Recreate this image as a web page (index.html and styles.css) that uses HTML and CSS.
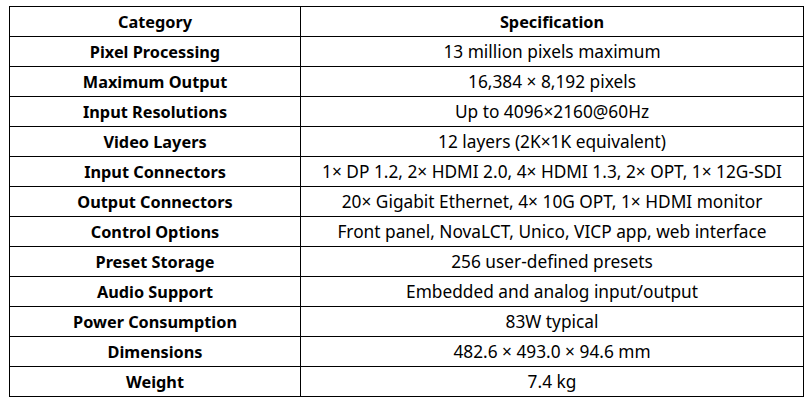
FILE: index.html
```html
<!DOCTYPE html>
<html>
<head>
<meta charset="utf-8">
<link rel="stylesheet" href="styles.css">
</head>
<body>
<table class="spec">
<colgroup><col class="c1"><col class="c2"></colgroup>
<thead>
<tr><th>Category</th><th>Specification</th></tr>
</thead>
<tbody>
<tr><th>Pixel Processing</th><td>13 million pixels maximum</td></tr>
<tr><th>Maximum Output</th><td>16,384 × 8,192 pixels</td></tr>
<tr><th>Input Resolutions</th><td>Up to 4096×2160@60Hz</td></tr>
<tr><th>Video Layers</th><td>12 layers (2K×1K equivalent)</td></tr>
<tr><th>Input Connectors</th><td>1× DP 1.2, 2× HDMI 2.0, 4× HDMI 1.3, 2× OPT, 1× 12G-SDI</td></tr>
<tr><th>Output Connectors</th><td>20× Gigabit Ethernet, 4× 10G OPT, 1× HDMI monitor</td></tr>
<tr><th>Control Options</th><td>Front panel, NovaLCT, Unico, VICP app, web interface</td></tr>
<tr><th>Preset Storage</th><td>256 user-defined presets</td></tr>
<tr><th>Audio Support</th><td>Embedded and analog input/output</td></tr>
<tr><th>Power Consumption</th><td>83W typical</td></tr>
<tr><th>Dimensions</th><td>482.6 × 493.0 × 94.6 mm</td></tr>
<tr><th>Weight</th><td>7.4 kg</td></tr>
</tbody>
</table>
</body>
</html>
```
FILE: styles.css
```css
html, body {
  margin: 0;
  padding: 0;
  background: #fff;
}
body {
  padding: 6px 0 0 9px;
  font-family: "Noto Sans", "Open Sans", sans-serif;
  color: #000;
}
.spec {
  border-collapse: collapse;
  table-layout: fixed;
  width: 794px;
}
.c1 { width: 291px; }
.c2 { width: 503px; }
.spec th, .spec td {
  border: 1px solid #000;
  height: 29px;
  padding: 0 4px;
  text-align: center;
  vertical-align: middle;
  line-height: 20px;
  white-space: nowrap;
}
.spec th { font-weight: 700; font-size: 16.3px; }
.spec td { font-weight: 400; font-size: 17.3px; }
```
